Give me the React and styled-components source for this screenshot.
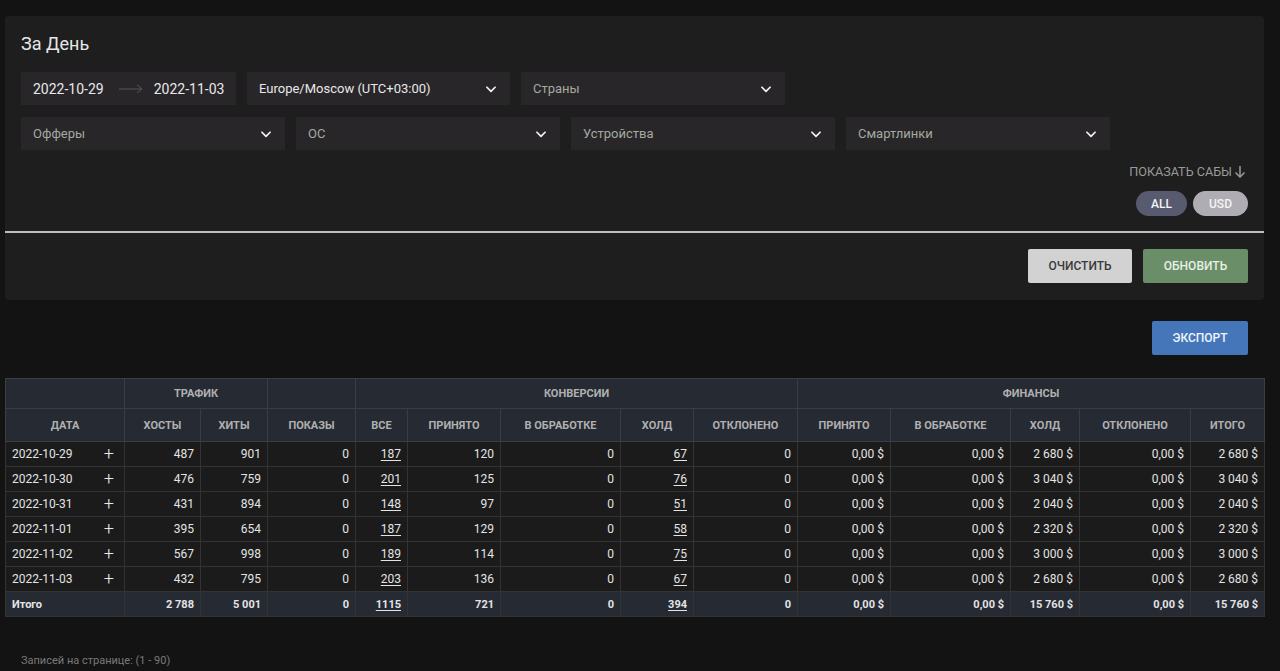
import React from 'react';
import styled, { createGlobalStyle } from 'styled-components';

const GlobalStyle = createGlobalStyle`
	body {
		margin: 0;
		background: #131313;
		font-family: Roboto, "Noto Sans", Arial, sans-serif;
		color: #e0e0e0;
	}
`

const Page = styled.div`
	padding: 16px 16px 0 5px;
	min-height: 671px;
	box-sizing: border-box;
`

const Panel = styled.div`
	background: #1e1e1e;
	border-radius: 4px;
`

const PanelBody = styled.div`
	padding: 17px 16px 15px 16px;
	display: flex;
	flex-direction: column;
`

const Title = styled.h2`
	margin: 0 0 17px 0;
	font-size: 18px;
	font-weight: 400;
	color: #e6e6e6;
	line-height: 22px;
`

const FieldRow = styled.div`
	display: flex;
	gap: 11px;
	margin-bottom: ${p => p.$mb || 0}px;
`

const Field = styled.div`
	display: flex;
	align-items: center;
	justify-content: space-between;
	box-sizing: border-box;
	width: ${p => p.$w}px;
	height: 33px;
	padding: 0 12px;
	background: #29262a;
	font-size: 13px;
	white-space: nowrap;
	color: ${p => p.$placeholder ? '#a3aa9f' : '#e8e8e8'};
`

const DateRange = styled(Field)`
	justify-content: flex-start;
	padding: 0 0 0 12px;
`

const DateText = styled.span`
	color: #e8e8e8;
	font-size: 14px;
	flex-shrink: 0;
`

const RangeArrow = styled.svg`
	flex-shrink: 0;
	margin: 0 11px 0 15px;
`

const Right = styled.div`
	display: flex;
	justify-content: flex-end;
	align-items: center;
	gap: 6px;
`

const SubsLink = styled.div`
	display: flex;
	align-items: center;
	gap: 2px;
	font-size: 12.6px;
	color: #9a9a9a;
	margin-top: 14px;
	margin-right: 2px;
`

const Pill = styled.div`
	display: flex;
	align-items: center;
	justify-content: center;
	width: ${p => p.$w}px;
	height: 25px;
	border-radius: 13px;
	font-size: 12px;
	font-weight: 500;
	color: #f4f4f4;
	background: ${p => p.$bg};
	margin-top: 12px;
`

const Divider = styled.div`
	height: 2px;
	background: #bdbdbd;
`

const Actions = styled.div`
	display: flex;
	justify-content: flex-end;
	gap: 11px;
	padding: 16px 16px 17px 16px;
`

const Button = styled.button`
	height: 34px;
	width: ${p => p.$w}px;
	border: none;
	border-radius: 2px;
	background: ${p => p.$bg};
	color: ${p => p.$color};
	font-family: Roboto, "Noto Sans", Arial, sans-serif;
	font-size: 12px;
	font-weight: 500;
	cursor: pointer;
`

const ExportBar = styled.div`
	display: flex;
	justify-content: flex-end;
	padding: 21px 16px 23px 0;
`

const Table = styled.table`
	width: 1259px;
	border-collapse: collapse;
	table-layout: fixed;
	font-size: 12px;
`

const Th = styled.th`
	background: #252a33;
	color: #b0b0b0;
	font-size: 11px;
	font-weight: 700;
	text-transform: uppercase;
	height: ${p => p.$h}px;
	padding: 0;
	border: 1px solid #3a3d44;
	text-align: center;
`

const Tr = styled.tr`
	background: ${p => p.$total ? '#252a33' : '#1b1b1b'};
	font-weight: ${p => p.$total ? 700 : 400};
`

const Td = styled.td`
	height: 24px;
	padding: 0 6px;
	border: 1px solid #333;
	text-align: ${p => p.$left ? 'left' : 'right'};
	color: #e4e4e4;
	white-space: nowrap;
	font-size: ${p => p.$total ? 11 : 12}px;
`

const DateCell = styled.div`
	display: flex;
	justify-content: space-between;
	align-items: center;
	padding-right: 4px;
`

const Plus = styled.span`
	font-size: 18px;
	font-weight: 300;
	line-height: 1;
	color: #e8e8e8;
`

const LinkNum = styled.a`
	color: #e4e4e4;
	text-decoration: underline;
	text-underline-offset: 2px;
`

const Footer = styled.div`
	padding: 37px 0 0 16px;
	font-size: 11px;
	color: #7a7a7a;
`

const Chevron = () => (
	<svg width="14" height="14" viewBox="0 0 24 24" fill="none" stroke="#f0f0f0" strokeWidth="3" strokeLinecap="round" strokeLinejoin="round">
		<polyline points="5 9 12 16 19 9" />
	</svg>
)

const widths = [119, 76, 67, 88, 52, 93, 120, 73, 104, 93, 120, 69, 111, 74]
const heads = ['Дата', 'Хосты', 'Хиты', 'Показы', 'Все', 'Принято', 'В обработке', 'Холд', 'Отклонено', 'Принято', 'В обработке', 'Холд', 'Отклонено', 'Итого']

const rows = [
	['2022-10-29', '487', '901', '0', '187', '120', '0', '67', '0', '0,00 $', '0,00 $', '2 680 $', '0,00 $', '2 680 $'],
	['2022-10-30', '476', '759', '0', '201', '125', '0', '76', '0', '0,00 $', '0,00 $', '3 040 $', '0,00 $', '3 040 $'],
	['2022-10-31', '431', '894', '0', '148', '97', '0', '51', '0', '0,00 $', '0,00 $', '2 040 $', '0,00 $', '2 040 $'],
	['2022-11-01', '395', '654', '0', '187', '129', '0', '58', '0', '0,00 $', '0,00 $', '2 320 $', '0,00 $', '2 320 $'],
	['2022-11-02', '567', '998', '0', '189', '114', '0', '75', '0', '0,00 $', '0,00 $', '3 000 $', '0,00 $', '3 000 $'],
	['2022-11-03', '432', '795', '0', '203', '136', '0', '67', '0', '0,00 $', '0,00 $', '2 680 $', '0,00 $', '2 680 $'],
]
const total = ['Итого', '2 788', '5 001', '0', '1115', '721', '0', '394', '0', '0,00 $', '0,00 $', '15 760 $', '0,00 $', '15 760 $']

const linkCols = [4, 7]

function renderRow(r, isTotal) {
	return r.map((v, i) => {
		if (i === 0) {
			return (
				<Td key={i} $left $total={isTotal}>
					{isTotal ? v : <DateCell>{v}<Plus>+</Plus></DateCell>}
				</Td>
			)
		}
		return (
			<Td key={i} $total={isTotal}>
				{linkCols.includes(i) ? <LinkNum>{v}</LinkNum> : v}
			</Td>
		)
	})
}

function App() {
	return (
		<>
			<GlobalStyle />
			<Page>
				<Panel>
					<PanelBody>
						<Title>За День</Title>
						<FieldRow $mb={12}>
							<DateRange $w={215}>
								<DateText>2022-10-29</DateText>
								<RangeArrow width="24" height="10" viewBox="0 0 24 10" fill="none" stroke="#555" strokeWidth="1">
									<line x1="0" y1="5" x2="23" y2="5" />
									<polyline points="18 1 23 5 18 9" />
								</RangeArrow>
								<DateText>2022-11-03</DateText>
							</DateRange>
							<Field $w={263}>Europe/Moscow (UTC+03:00)<Chevron /></Field>
							<Field $w={264} $placeholder>Страны<Chevron /></Field>
						</FieldRow>
						<FieldRow>
							<Field $w={264} $placeholder>Офферы<Chevron /></Field>
							<Field $w={264} $placeholder>ОС<Chevron /></Field>
							<Field $w={264} $placeholder>Устройства<Chevron /></Field>
							<Field $w={264} $placeholder>Смартлинки<Chevron /></Field>
						</FieldRow>
						<Right>
							<SubsLink>
								ПОКАЗАТЬ САБЫ
								<svg width="12" height="13" viewBox="0 0 12 13" fill="none" stroke="#9a9a9a" strokeWidth="1.5">
									<line x1="6" y1="1" x2="6" y2="12" />
									<polyline points="1.5 7.5 6 12 10.5 7.5" />
								</svg>
							</SubsLink>
						</Right>
						<Right>
							<Pill $w={51} $bg="#585a70">ALL</Pill>
							<Pill $w={55} $bg="#afadb3">USD</Pill>
						</Right>
					</PanelBody>
					<Divider />
					<Actions>
						<Button $w={104} $bg="#d2d2d2" $color="#3a3a3a">ОЧИСТИТЬ</Button>
						<Button $w={105} $bg="#6a8e67" $color="#e8efe6">ОБНОВИТЬ</Button>
					</Actions>
				</Panel>
				<ExportBar>
					<Button $w={96} $bg="#4576ba" $color="#f0f4fa">ЭКСПОРТ</Button>
				</ExportBar>
				<Table>
					<colgroup>
						{widths.map((w, i) => <col key={i} style={{ width: w }} />)}
					</colgroup>
					<thead>
						<tr>
							<Th $h={29}></Th>
							<Th $h={29} colSpan={2}>Трафик</Th>
							<Th $h={29}></Th>
							<Th $h={29} colSpan={5}>Конверсии</Th>
							<Th $h={29} colSpan={5}>Финансы</Th>
						</tr>
						<tr>
							{heads.map((h, i) => <Th key={i} $h={32}>{h}</Th>)}
						</tr>
					</thead>
					<tbody>
						{rows.map((r, i) => <Tr key={i}>{renderRow(r, false)}</Tr>)}
						<Tr $total>{renderRow(total, true)}</Tr>
					</tbody>
				</Table>
				<Footer>Записей на странице: (1 - 90)</Footer>
			</Page>
		</>
	);
}

export default App;
